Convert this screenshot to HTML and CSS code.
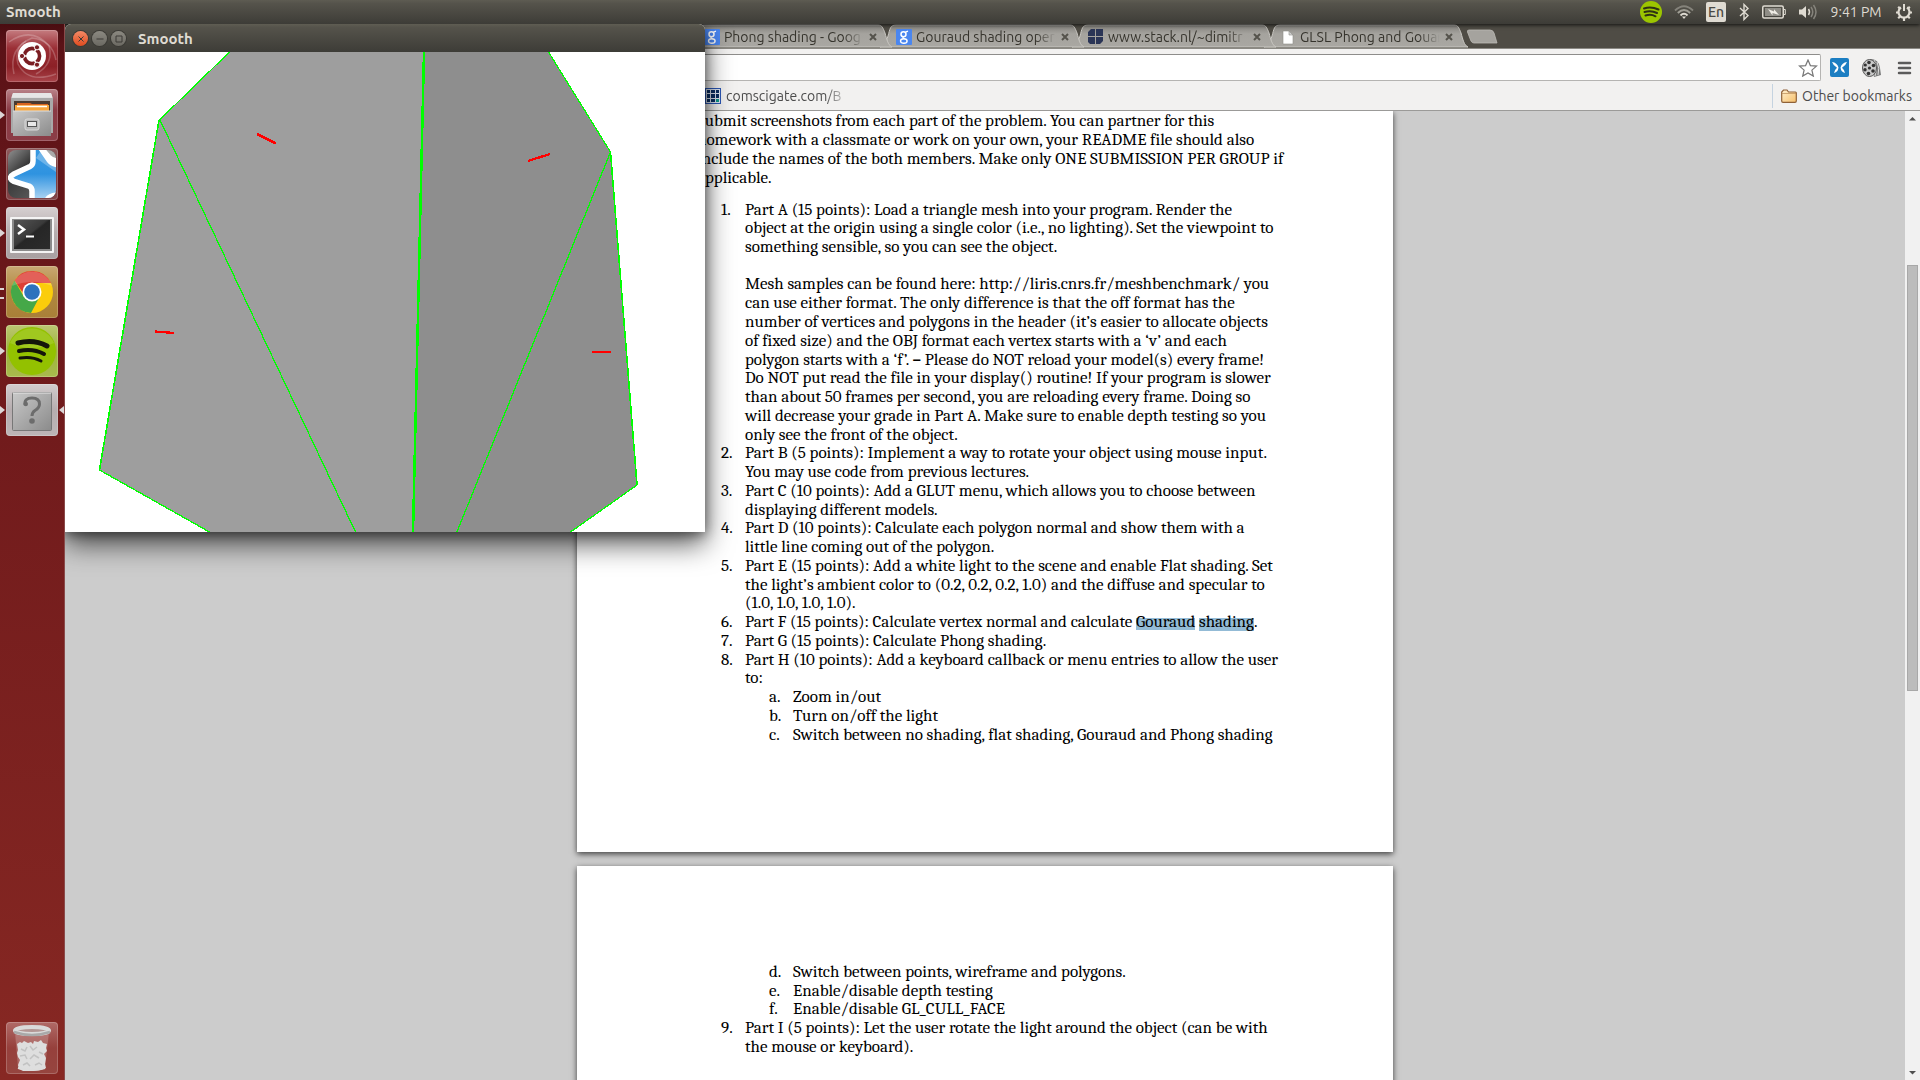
FILE: index.html
```html
<!DOCTYPE html>
<html lang="en">
<head>
<meta charset="utf-8">
<title>Smooth</title>
<link rel="stylesheet" href="styles.css">
</head>
<body>
<svg class="defs" width="0" height="0" aria-hidden="true">
  <defs>
    <linearGradient id="tabFill" x1="0" y1="0" x2="0" y2="1">
      <stop offset="0" stop-color="#83817c"/><stop offset=".4" stop-color="#a5a39e"/><stop offset="1" stop-color="#a9a7a2"/>
    </linearGradient>
    <linearGradient id="steel" x1="0" y1="0" x2="1" y2="1">
      <stop offset="0" stop-color="#c9c9c9"/><stop offset="1" stop-color="#8b8b8b"/>
    </linearGradient>
    <linearGradient id="blue" x1="0" y1="0" x2="0" y2="1">
      <stop offset="0" stop-color="#3c9be2"/><stop offset=".5" stop-color="#2f93e0"/><stop offset="1" stop-color="#c4e0f6"/>
    </linearGradient>
    <linearGradient id="dark" x1="0" y1="0" x2="1" y2="1">
      <stop offset="0" stop-color="#9a9a9a"/><stop offset=".35" stop-color="#3a3a3a"/><stop offset="1" stop-color="#6e6e6e"/>
    </linearGradient>
    <linearGradient id="screen" x1="0" y1="0" x2="1" y2="1">
      <stop offset="0" stop-color="#555"/><stop offset=".45" stop-color="#3a3a3a"/><stop offset=".5" stop-color="#262626"/><stop offset="1" stop-color="#2c2c2c"/>
    </linearGradient>
    <linearGradient id="folder" x1="0" y1="0" x2="1" y2="1">
      <stop offset="0" stop-color="#fff0cf"/><stop offset="1" stop-color="#f6bf6b"/>
    </linearGradient>
    <path id="tabShape" d="M0 23C5 22 6 18 8 12C10 5 10 1 16 1H190C194 1 195 4 197 9C199 16 200 21 204 23Z"/>
    <g id="google">
      <rect width="16" height="16" rx="1" fill="#4a86f0"/>
      <ellipse cx="7.500" cy="5.200" rx="2.500" ry="2.500" fill="none" stroke="#fff" stroke-width="1.500"/>
      <path d="M9.500 3.200L12 2.200M8 7.500C6 8.500 7 9.300 8.500 9.800" fill="none" stroke="#fff" stroke-width="1.300"/>
      <ellipse cx="7.800" cy="12" rx="3.300" ry="2.200" fill="none" stroke="#fff" stroke-width="1.400"/>
    </g>
  </defs>
</svg>

<header class="panel">
  <span class="panel-title">Smooth</span>
  <div class="indicators">
    <svg width="22" height="22" viewBox="0 0 22 22"><circle cx="11" cy="11" r="11" fill="#9cc500"/><path d="M4 7.500Q11 5 18.500 8.500M4.500 11Q11 9 17 12M5.500 14.500Q11 12.700 15.500 15.300" fill="none" stroke="#2e3014" stroke-width="2" stroke-linecap="round"/></svg>
    <svg width="20" height="14" viewBox="0 0 20 14" fill="none" stroke-width="1.800"><path d="M1 5.500Q10-3 19 5.500" stroke="#85837b"/><path d="M3.800 8Q10 2 16.200 8" stroke="#a19f96"/><path d="M6.500 10.500Q10 7 13.500 10.500" stroke="#dfdbd2"/><path d="M8 11.500h4L10 14z" fill="#dfdbd2"/></svg>
    <span class="lang">En</span>
    <svg width="12" height="18" viewBox="0 0 12 18"><path d="M2 5L10 12.500L6 16.500V1.500L10 5.500L2 13" fill="none" stroke="#dfdbd2" stroke-width="1.400"/></svg>
    <svg width="24" height="14" viewBox="0 0 24 14"><rect x=".75" y="1" width="20.500" height="12" rx="1.500" fill="none" stroke="#dfdbd2" stroke-width="1.500"/><path d="M22 4.500h1.300v5H22" fill="none" stroke="#dfdbd2"/><rect x="3" y="3" width="16" height="8" fill="#8f8d86"/><path d="M6 4L12 6.500V4.200L17 10L10.500 8V10.500Z" fill="#f0ede6"/></svg>
    <svg width="20" height="18" viewBox="0 0 20 18"><path d="M1 6.500h3L8 3v12L4 11.500H1z" fill="#dfdbd2"/><path d="M10.500 6Q12.500 9 10.500 12" fill="none" stroke="#dfdbd2" stroke-width="1.500"/><path d="M13 4Q16.500 9 13 14M15.500 2Q20.500 9 15.500 16" fill="none" stroke="#85837b" stroke-width="1.500"/></svg>
    <time class="clock">9:41 PM</time>
    <svg width="16" height="18" viewBox="0 0 16 18"><path d="M5 4.500A5.500 5.500 0 1 0 11 4.500" fill="none" stroke="#dfdbd2" stroke-width="2.200"/><path d="M8 1v7" stroke="#dfdbd2" stroke-width="2"/><path d="M0 9.500h3M13 9.500h3M8 14.500v3.500M2.200 15.300l2-2M13.800 15.300l-2-2M2.200 3.700l2 2M13.800 3.700l-2 2" stroke="#dfdbd2" stroke-width="2.200"/></svg>
  </div>
</header>

<main class="desktop">
  <nav class="launcher" aria-label="Launcher">
    <button class="tile dash" aria-label="Dash">
      <svg width="52" height="52" viewBox="0 0 52 52"><g fill="none" stroke="#fff" stroke-opacity=".22" stroke-width="1.500"><path d="M3 12Q26-4 43 16Q48 34 30 44"/><path d="M8 44Q2 18 26 8Q46 10 50 30"/><path d="M50 44Q22 54 12 34Q8 18 20 11"/></g><circle cx="26" cy="26" r="14" fill="#fff"/><circle cx="26" cy="26" r="7.600" fill="none" stroke="#7a1d22" stroke-width="3.600"/><g stroke="#fff" stroke-width="1.500"><path d="M21 26h-6M28.500 30.300l3 5.200M28.500 21.700l3-5.200"/></g><g fill="#7a1d22" stroke="#fff"><circle cx="16" cy="26" r="2.600"/><circle cx="31" cy="17.300" r="2.600"/><circle cx="31" cy="34.700" r="2.600"/></g></svg>
    </button>
    <button class="tile files running" aria-label="Files">
      <svg width="52" height="52" viewBox="0 0 52 52"><path d="M7 4h38l2 6v34H5V10z" fill="#d8d8d8"/><path d="M5 9h42v35H5z" fill="#a9a9a9"/><path d="M7 4h38l1.500 4.500h-41z" fill="#e6e6e6"/><path d="M8 12h36v11H8z" fill="#4a3a30"/><path d="M11 14h13l2 1h16v8H11z" fill="#d9641f"/><path d="M9 16h34v6H9z" fill="#f7a63d"/><path d="M11 17.500h30" stroke="#fff" stroke-width="1.500"/><path d="M7 22h38v25H7z" fill="url(#steel)"/><path d="M7 22h38" stroke="#ddd"/><rect x="19" y="30" width="14" height="11" rx="2" fill="#b9b9b9" stroke="#dadada"/><rect x="21.500" y="32.500" width="9" height="5" fill="#e8e8e8" stroke="#555"/></svg>
    </button>
    <button class="tile anki" aria-label="Anki">
      <svg width="52" height="52" viewBox="0 0 52 52"><defs><clipPath id="ankiClip"><rect x="2" y="2" width="48" height="48" rx="8"/></clipPath></defs><g clip-path="url(#ankiClip)"><path d="M0 0h52v52H0z" fill="url(#dark)"/><path d="M27-4V13Q27 17 24 18.500L8 26Q1 30 8 33.500L23 38Q26 39.500 26 43V56H60V18Q46 17 43 12L32-4Z" fill="url(#blue)" stroke="#fff" stroke-width="5.500"/><path d="M30 10L50 24V14L34 4Z" fill="#fff" opacity=".28"/><path d="M38-2h16v11L46 10z" fill="#aaa"/><path d="M34-2L43 9Q46 13 54 12" fill="none" stroke="#fff" stroke-width="5"/><path d="M40 54Q42 47 52 47" fill="none" stroke="#fff" stroke-width="5"/></g></svg>
    </button>
    <button class="tile terminal running" aria-label="Terminal">
      <svg width="52" height="52" viewBox="0 0 52 52"><rect x="4" y="10" width="44" height="36" rx="1" fill="#f4f4f4"/><rect x="6" y="12" width="40" height="32" fill="#8b8b8b"/><rect x="8" y="13" width="36" height="29" fill="url(#screen)"/><path d="M12 18l6 4.500-6 4.500" fill="none" stroke="#fff" stroke-width="2.500"/><path d="M20 29.500h8" stroke="#fff" stroke-width="2"/></svg>
    </button>
    <button class="tile chrome multi" aria-label="Google Chrome">
      <svg width="52" height="52" viewBox="0 0 52 52"><circle cx="26" cy="26" r="21" fill="#fbcd0b"/><path d="M8.500 14.500A21 21 0 0 1 45 17H26L17 27z" fill="#dd3e35"/><path d="M8.500 14.500A21 21 0 0 0 25 47L34 30L18 31z" fill="#45a848"/><circle cx="26" cy="26" r="9.500" fill="#fff"/><circle cx="26" cy="26" r="7.800" fill="#2e72bd"/><path d="M6 20A21 21 0 0 1 46 20Q26 12 6 20" fill="#fff" opacity=".18"/></svg>
    </button>
    <button class="tile spotify running" aria-label="Spotify">
      <svg width="52" height="52" viewBox="0 0 52 52"><circle cx="26" cy="26" r="24" fill="#93c100"/><path d="M4 18A24 24 0 0 1 48 18Q26 28 4 18" fill="#fff" opacity=".12"/><g fill="none" stroke="#14160a" stroke-linecap="round"><path d="M12 18Q28 14 41 21" stroke-width="5"/><path d="M13 26Q27 23 38 29" stroke-width="4"/><path d="M14 33Q26 31 35 36" stroke-width="3"/></g></svg>
    </button>
    <button class="tile unknown running focused" aria-label="Smooth">
      <svg width="52" height="52" viewBox="0 0 52 52"><rect x="6.500" y="8.500" width="39" height="38" rx="1" fill="url(#steel)" stroke="#777"/><path d="M7 9h38" stroke="#e8e8e8"/><path d="M19 21Q18 14 26 14Q33.500 14 33.500 20Q33.500 24 29 26.500Q26 28.500 26 32" fill="none" stroke="#6c6c6c" stroke-width="3"/><circle cx="19.800" cy="20" r="2.200" fill="#6c6c6c"/><circle cx="26" cy="37" r="2.800" fill="#6c6c6c"/></svg>
    </button>
    <button class="tile trash" aria-label="Trash">
      <svg width="52" height="52" viewBox="0 0 52 52"><path d="M9 10L12 46Q26 49 39 46L43 10z" fill="#fff" opacity=".2"/><path d="M11 22l3-2 2 1 2-2 4 2 3-1 2 2 1-3 4 1 3-2 2 3 4 1-1 4 1 3-3 3 2 4-1 6 1 4-5 2-8 1-10 0-4-2-1-4 2-5-2-3-1-4 1-3z" fill="#dedede"/><path d="M15 27l4 2 2-4M24 24l3 4 4-3M33 30l4 2M14 34l5-1 2 4M24 37l4-4 5 3M17 43l4-2 3 3M29 43l4-2 3 2" fill="none" stroke="#c2c2c2" stroke-width="1.500"/><path d="M12 46Q26 50 39 46" fill="none" stroke="#ddd" stroke-width="2"/><ellipse cx="26" cy="8.500" rx="17" ry="3.600" fill="#b39795" stroke="#dadada" stroke-width="4"/><path d="M8 10Q26 16 44 10" fill="none" stroke="#a9a9a9" stroke-width="2.500"/></svg>
    </button>
  </nav>

  <section class="browser" aria-label="Browser">
    <div class="tabstrip">
      <div class="tab">
        <svg class="tab-bg" width="204" height="24" viewBox="0 0 204 24"><use href="#tabShape" fill="url(#tabFill)" stroke="#c9c7c2"/></svg>
        <svg class="favicon" width="16" height="16" viewBox="0 0 16 16"><use href="#google"/></svg>
        <span class="tab-title">Phong shading - Goog</span>
        <button class="tab-close" aria-label="Close tab"><svg width="8" height="8" viewBox="0 0 8 8"><path d="M1 1l6 6M7 1L1 7"/></svg></button>
      </div>
      <div class="tab">
        <svg class="tab-bg" width="204" height="24" viewBox="0 0 204 24"><use href="#tabShape" fill="url(#tabFill)" stroke="#c9c7c2"/></svg>
        <svg class="favicon" width="16" height="16" viewBox="0 0 16 16"><use href="#google"/></svg>
        <span class="tab-title">Gouraud shading oper</span>
        <button class="tab-close" aria-label="Close tab"><svg width="8" height="8" viewBox="0 0 8 8"><path d="M1 1l6 6M7 1L1 7"/></svg></button>
      </div>
      <div class="tab">
        <svg class="tab-bg" width="204" height="24" viewBox="0 0 204 24"><use href="#tabShape" fill="url(#tabFill)" stroke="#c9c7c2"/></svg>
        <svg class="favicon" width="16" height="16" viewBox="0 0 16 16"><path d="M3 0h4v7H0V3zM8 0h7v7H8zM0 8h7v7H2L0 13zM8 8h7v4l-3 3H8z" fill="#2b3556"/></svg>
        <span class="tab-title">www.stack.nl/~dimitr</span>
        <button class="tab-close" aria-label="Close tab"><svg width="8" height="8" viewBox="0 0 8 8"><path d="M1 1l6 6M7 1L1 7"/></svg></button>
      </div>
      <div class="tab">
        <svg class="tab-bg" width="204" height="24" viewBox="0 0 204 24"><use href="#tabShape" fill="url(#tabFill)" stroke="#c9c7c2"/></svg>
        <svg class="favicon" width="16" height="16" viewBox="0 0 16 16"><path d="M3 2h6l4 4v9H3z" fill="#fff" stroke="#8f8d88" stroke-width=".6"/><path d="M9 2v4h4z" fill="#d0d0d0" stroke="#8f8d88" stroke-width=".6"/></svg>
        <span class="tab-title">GLSL Phong and Gouar</span>
        <button class="tab-close" aria-label="Close tab"><svg width="8" height="8" viewBox="0 0 8 8"><path d="M1 1l6 6M7 1L1 7"/></svg></button>
      </div>
      <button class="new-tab" aria-label="New tab"><svg width="32" height="16" viewBox="0 0 32 16"><path d="M3 1H24Q27 1 28 4L31 14H8Q6 14 5 12L1.500 3Q1 1 3 1Z" fill="#a5a39e" stroke="#bcbab5" stroke-width=".8"/></svg></button>
    </div>

    <div class="toolbar">
      <div class="omnibox">
        <input class="address" type="text" aria-label="Address">
        <button class="icon-btn" aria-label="Bookmark this page"><svg width="20" height="18" viewBox="0 0 20 18"><path d="M10 1l2.400 5.600 6.100.5-4.600 4 1.400 6L10 13.900 4.700 17.100l1.400-6-4.600-4 6.100-.5z" fill="#fff" stroke="#777" stroke-width="1.200"/></svg></button>
      </div>
      <div class="extensions">
        <button class="icon-btn" aria-label="Extension"><svg width="20" height="20" viewBox="0 0 20 20"><rect width="19" height="19" rx="2" fill="#1c7ec2"/><path d="M2 4Q7 4.500 8.500 9.500Q8 14 4 15Q4.500 12 7 9.800Q3.500 8 2 4M17 4Q12 4.500 10.500 9.500Q11 14 15 15Q14.500 12 12 9.800Q15.500 8 17 4" fill="#fff"/></svg></button>
        <button class="icon-btn" aria-label="Video extension"><svg width="20" height="20" viewBox="0 0 20 20"><path d="M8 1Q17 1 18 10L19 17L12 19Z" fill="#7c7c7c"/><path d="M12 2Q16 8 13 18M15 4Q18 10 16 17" fill="none" stroke="#ddd"/><ellipse cx="7.500" cy="10" rx="7" ry="8.500" fill="#c9c9c9" stroke="#555"/><g fill="#333"><circle cx="7.500" cy="10" r="1.600"/><circle cx="7" cy="4.500" r="1.800"/><circle cx="11.500" cy="7.500" r="1.800"/><circle cx="11" cy="13" r="1.800"/><circle cx="6.500" cy="15.500" r="1.800"/><circle cx="3" cy="11.800" r="1.700"/><circle cx="3.300" cy="7" r="1.600"/></g></svg></button>
        <button class="icon-btn" aria-label="Menu"><svg width="20" height="16" viewBox="0 0 20 16"><path d="M5 3h11M5 8h11M5 13h11" stroke="#5b5b5b" stroke-width="2.500" stroke-linecap="round"/></svg></button>
      </div>
    </div>

    <div class="bookmarks">
      <a class="bookmark" href="#">
        <svg width="16" height="16" viewBox="0 0 16 16"><rect x=".5" y=".5" width="15" height="15" fill="#dfe8f5" stroke="#2b57b5"/><path d="M2 2h3v3H2zM6 2h4v3H6zM11 2h3v3h-3zM2 6h3v4H2zM6 6h4v4H6zM11 6h3v4h-3zM2 11h3v3H2zM6 11h4v3H6z" fill="#0b2f63"/><path d="M11 11h3v3h-3z" fill="#109a8a"/></svg>
        <span class="bookmark-title">comscigate.com/B</span>
      </a>
      <a class="bookmark other" href="#">
        <svg width="16" height="14" viewBox="0 0 16 14"><path d="M.7 12V3L2.500 1H6l1.500 2H14.500Q15.300 3 15.300 4V12Q15.300 13.300 14 13.300H2Q.7 13.300 .7 12Z" fill="url(#folder)" stroke="#8f6138" stroke-width="1.200"/><path d="M1 4.500h14" stroke="#b98a55" stroke-width=".7"/></svg>
        <span>Other bookmarks</span>
      </a>
    </div>

    <div class="viewer">
      <div class="pages">
        <article class="page first">
          <p class="intro">
            <span class="line">Submit screenshots from each part of the problem. You can partner for this</span>
            <span class="line">homework with a classmate or work on your own, your README file should also</span>
            <span class="line">include the names of the both members. Make only ONE SUBMISSION PER GROUP if</span>
            <span class="line">applicable.</span>
          </p>
          <ol class="parts">
            <li><span class="num">1.</span><div>
              <span class="line tight">Part A (15 points): Load a triangle mesh into your program. Render the</span>
              <span class="line">object at the origin using a single color (i.e., no lighting). Set the viewpoint to</span>
              <span class="line">something sensible, so you can see the object.</span>
              <span class="line tight">&nbsp;</span>
              <span class="line">Mesh samples can be found here: http://liris.cnrs.fr/meshbenchmark/ you</span>
              <span class="line">can use either format. The only difference is that the off format has the</span>
              <span class="line">number of vertices and polygons in the header (it’s easier to allocate objects</span>
              <span class="line">of fixed size) and the OBJ format each vertex starts with a ‘v’ and each</span>
              <span class="line tight">polygon starts with a ‘f’. <b>–</b> Please do NOT reload your model(s) every frame!</span>
              <span class="line">Do NOT put read the file in your display() routine! If your program is slower</span>
              <span class="line">than about 50 frames per second, you are reloading every frame. Doing so</span>
              <span class="line">will decrease your grade in Part A. Make sure to enable depth testing so you</span>
              <span class="line tight">only see the front of the object.</span>
            </div></li>
            <li><span class="num">2.</span><div>
              <span class="line">Part B (5 points): Implement a way to rotate your object using mouse input.</span>
              <span class="line">You may use code from previous lectures.</span>
            </div></li>
            <li><span class="num">3.</span><div>
              <span class="line">Part C (10 points): Add a GLUT menu, which allows you to choose between</span>
              <span class="line tight">displaying different models.</span>
            </div></li>
            <li><span class="num">4.</span><div>
              <span class="line">Part D (10 points): Calculate each polygon normal and show them with a</span>
              <span class="line">little line coming out of the polygon.</span>
            </div></li>
            <li><span class="num">5.</span><div>
              <span class="line">Part E (15 points): Add a white light to the scene and enable Flat shading. Set</span>
              <span class="line tight">the light’s ambient color to (0.2, 0.2, 0.2, 1.0) and the diffuse and specular to</span>
              <span class="line">(1.0, 1.0, 1.0, 1.0).</span>
            </div></li>
            <li><span class="num">6.</span><div>
              <span class="line">Part F (15 points): Calculate vertex normal and calculate <mark>Gouraud</mark> <mark class="deep">shading</mark>.</span>
            </div></li>
            <li><span class="num">7.</span><div>
              <span class="line">Part G (15 points): Calculate Phong shading.</span>
            </div></li>
            <li><span class="num">8.</span><div>
              <span class="line tight">Part H (10 points): Add a keyboard callback or menu entries to allow the user</span>
              <span class="line">to:</span>
              <ol>
                <li><span class="num">a.</span><span class="line">Zoom in/out</span></li>
                <li><span class="num">b.</span><span class="line">Turn on/off the light</span></li>
                <li><span class="num">c.</span><span class="line">Switch between no shading, flat shading, Gouraud and Phong shading</span></li>
              </ol>
            </div></li>
          </ol>
        </article>
        <article class="page second">
          <ol class="parts">
            <li><span class="num"></span><ol>
              <li><span class="num">d.</span><span class="line">Switch between points, wireframe and polygons.</span></li>
              <li class="tight"><span class="num">e.</span><span class="line">Enable/disable depth testing</span></li>
              <li><span class="num">f.</span><span class="line">Enable/disable GL_CULL_FACE</span></li>
            </ol></li>
            <li><span class="num">9.</span><div>
              <span class="line">Part I (5 points): Let the user rotate the light around the object (can be with</span>
              <span class="line">the mouse or keyboard).</span>
            </div></li>
          </ol>
        </article>
      </div>
      <div class="scrollbar">
        <svg width="15" height="15" viewBox="0 0 15 15"><path d="M4 9.500L7.500 6L11 9.500z" fill="#505050"/></svg>
        <div class="track"><div class="thumb"></div></div>
        <svg width="15" height="15" viewBox="0 0 15 15"><path d="M4 6L7.500 9.500L11 6z" fill="#505050"/></svg>
      </div>
    </div>
  </section>
</main>

<section class="window" aria-label="Smooth window">
  <div class="titlebar">
    <button class="win-btn close" aria-label="Close"><svg width="8" height="8" viewBox="0 0 8 8"><path d="M1.500 1.500l5 5M6.500 1.500l-5 5"/></svg></button>
    <button class="win-btn" aria-label="Minimize"><svg width="8" height="8" viewBox="0 0 8 8"><path d="M0.500 4h7"/></svg></button>
    <button class="win-btn" aria-label="Maximize"><svg width="8" height="8" viewBox="0 0 8 8"><path d="M1 1h6v6H1z"/></svg></button>
    <h1 class="win-title">Smooth</h1>
  </div>
  <svg class="scene" width="640" height="480" viewBox="0 0 640 480" shape-rendering="crispEdges">
    <path d="M164.500 0L94.500 68L34 418L144.500 480H348L359 0Z" fill="#9e9e9e"/>
    <path d="M359 0H483.500L545.500 100L572 433L505.500 480H348Z" fill="#8e8e8e"/>
    <g fill="none" stroke="#0f0">
      <path d="M164.500 0L94.500 68M34.500 418L144.500 480M95 68L291 481M483.500 0L545.500 100L391.500 481M572 433L505.500 480" stroke-width="1.300"/>
      <path d="M94 68L34.500 418M545.500 100L572 433" stroke-width="1.600"/>
      <path d="M359 0L348 480" stroke-width="2.500"/>
    </g>
    <path d="M192 82L211 91.500M463 109L485 102M90 279.500L109 281M527 300H546" fill="none" stroke="red" stroke-width="2.300"/>
  </svg>
</section>
</body>
</html>
```
FILE: styles.css
```css
* { box-sizing: border-box; }

body {
  margin: 0;
  height: 100vh;
  display: flex;
  flex-direction: column;
  overflow: hidden;
  position: relative;
  background: #ccc;
  font: 14px/20px Ubuntu, "Open Sans", "Noto Sans", sans-serif;
  color: #3c3b37;
}

button {
  margin: 0;
  padding: 0;
  border: 0;
  background: none;
  display: flex;
  align-items: center;
  justify-content: center;
}

svg { display: block; flex: none; }
.defs { position: absolute; }
ol { margin: 0; padding: 0; list-style: none; }

/* Top panel */
.panel {
  flex: none;
  height: 24px;
  padding: 0 8px 0 6px;
  display: flex;
  align-items: center;
  justify-content: space-between;
  background: linear-gradient(#5e5c52, #55534b 15%, #3d3c37);
  color: #dfdbd2;
  z-index: 2;
  box-shadow: 0 1px 4px rgba(0, 0, 0, .8);
}
.panel-title, .win-title {
  margin: 0;
  font-size: 15px;
  line-height: 20px;
  font-weight: bold;
  color: #dfdbd2;
}
.indicators { display: flex; align-items: center; gap: 12px; }
.lang {
  width: 20px;
  height: 20px;
  border-radius: 2px;
  background: #dfdbd2;
  color: #4a4943;
  text-align: center;
  line-height: 20px;
  font-weight: 500;
}
.clock { min-width: 52px; margin-right: 2px; text-align: center; }

.desktop { flex: 1; min-height: 0; display: flex; }

/* Launcher */
.launcher {
  flex: none;
  width: 65px;
  padding: 6px 6px 6px;
  display: flex;
  flex-direction: column;
  gap: 7px;
  background: linear-gradient(#4a0d11, #5b1217 2%, #6e191b 30%, #872823);
  border-right: 1px solid #8a4a4a;
  z-index: 4;
}
.tile {
  position: relative;
  width: 52px;
  height: 52px;
  border-radius: 4px;
  box-shadow: inset 0 0 0 1px rgba(255, 255, 255, .2);
}
.dash { background: linear-gradient(#c57c80, #9b2f36 35%, #8c2026 70%, #a8444a); }
.files { background: linear-gradient(#b98389, #8a3a44 40%, #8b3d47); }
.anki { background: linear-gradient(#8f5d5f, #7c3b3d 40%, #814548); }
.terminal { background: linear-gradient(#d6d0d1, #b5adae 50%, #a8a0a1); }
.chrome { background: linear-gradient(#c9a873, #b0893f 50%, #a97f38); }
.spotify { background: linear-gradient(#bcc772, #9db43a 50%, #a9ba4e); }
.unknown { background: linear-gradient(#d2cccd, #b6adaf 50%, #bdb6b7); }
.trash { margin-top: auto; background: linear-gradient(#b06a67, #96403c 50%, #96453f); }
.running::before, .focused::after {
  content: "";
  position: absolute;
  top: 22px;
  left: -6px;
  border: solid transparent;
  border-width: 4px 0 4px 5px;
  border-left-color: #dcd6d6;
}
.focused::after {
  left: 53px;
  border-width: 4px 5px 4px 0;
  border-right-color: #dcd6d6;
}
.multi::before {
  content: "";
  position: absolute;
  top: 22px;
  left: -6px;
  width: 4px;
  height: 7px;
  border: solid #dcd6d6;
  border-width: 2px 0;
}

/* Browser */
.browser {
  flex: 1;
  min-width: 0;
  display: flex;
  flex-direction: column;
  isolation: isolate;
}
.tabstrip {
  flex: none;
  height: 25px;
  padding-left: 623px;
  display: flex;
  align-items: flex-end;
  background: #4f4c45;
  border-bottom: 1px solid #8b8984;
}
.tab {
  position: relative;
  width: 192px;
  height: 24px;
  padding: 2px 0 0 16px;
  display: flex;
  align-items: center;
  gap: 4px;
}
.tab:nth-child(1) { z-index: 4; }
.tab:nth-child(2) { z-index: 3; }
.tab:nth-child(3) { z-index: 2; }
.tab:nth-child(4) { z-index: 1; }
.tab-bg { position: absolute; left: 0; top: 0; }
.favicon, .tab-title, .tab-close { position: relative; }
.tab-title {
  width: 140px;
  white-space: nowrap;
  color: #35332c;
  -webkit-mask-image: linear-gradient(90deg, #000 85%, transparent);
  mask-image: linear-gradient(90deg, #000 85%, transparent);
}
.tab-close { width: 10px; height: 16px; }
.tab-close path { stroke: #55534c; stroke-width: 2; }
.new-tab { margin: 0 0 3px 10px; }

.toolbar {
  flex: none;
  padding: 5px 6px 0 64px;
  display: flex;
  align-items: center;
  gap: 9px;
  background: #f2f1f0;
}
.omnibox {
  flex: 1;
  height: 27px;
  padding-right: 2px;
  display: flex;
  align-items: center;
  background: #fff;
  border: 1px solid #b5b4b2;
  border-top-color: #8e8d8b;
  border-radius: 2px;
}
.address { flex: 1; border: 0; outline: 0; background: none; font: inherit; }
.icon-btn { width: 20px; height: 20px; }
.extensions { display: flex; gap: 12px; }

.bookmarks {
  flex: none;
  height: 30px;
  padding: 0 8px 0 640px;
  display: flex;
  align-items: center;
  justify-content: space-between;
  background: #f2f1f0;
  border-bottom: 1px solid #9b9a98;
}
.bookmark {
  display: flex;
  align-items: center;
  gap: 5px;
  color: #4c4c4c;
  text-decoration: none;
}
.bookmark-title {
  width: 124px;
  white-space: nowrap;
  -webkit-mask-image: linear-gradient(90deg, #000 80%, transparent);
  mask-image: linear-gradient(90deg, #000 80%, transparent);
}
.other { height: 24px; padding-left: 8px; border-left: 1px solid #c5d3e0; }

/* Document viewer */
.viewer { flex: 1; min-height: 0; display: flex; background: #ccc; }
.pages {
  flex: 1;
  min-width: 0;
  overflow: hidden;
  display: flex;
  flex-direction: column;
  align-items: center;
  gap: 14px;
}
.page {
  flex: none;
  width: 816px;
  background: #fff;
  box-shadow: 0 2px 6px rgba(0, 0, 0, .7);
  font: 17px/19px Cambria, Caladea, "Liberation Serif", serif;
  color: #000;
}
.first { padding: 0 120px 108px; }
.second { padding: 96px 120px; }
.intro { margin: 0 0 13px; }
.line { display: block; white-space: nowrap; }
.tight { margin-bottom: -1px; }
.parts { padding-left: 24px; }
.parts ol { padding-left: 24px; }
.parts li { display: flex; }
.num { flex: none; width: 24px; }
mark {
  color: inherit;
  background: linear-gradient(#93bbd6, #93bbd6) 0 6px / 100% 12px no-repeat;
}
.deep { background-size: 100% 16px; }

.scrollbar {
  flex: none;
  width: 15px;
  display: flex;
  flex-direction: column;
  background: #f1f1f1;
}
.track {
  flex: 1;
  padding: 0 2px;
  display: grid;
  grid-template-rows: 139fr 426fr 374fr;
}
.thumb { grid-row: 2; background: #bcbcbc; border: 1px solid #a8a8a8; }

/* Floating window */
.window {
  position: absolute;
  left: 65px;
  top: 24px;
  width: 640px;
  z-index: 3;
  background: #fff;
  border-radius: 6px 6px 0 0;
  box-shadow: 0 12px 28px rgba(0, 0, 0, .65), 0 2px 12px rgba(0, 0, 0, .45);
  clip-path: inset(0 -60px -60px 0);
}
.titlebar {
  height: 28px;
  padding: 1px 0 0 8px;
  display: flex;
  align-items: center;
  gap: 4px;
  background: linear-gradient(#5f5d53, #55534b 12%, #3d3c37);
  border-radius: 6px 6px 0 0;
}
.win-btn {
  width: 15px;
  height: 15px;
  border-radius: 50%;
  background: linear-gradient(#8b8981, #6b6962);
  box-shadow: 0 0 0 1px #3b3a35;
}
.win-btn path { fill: none; stroke: #3c3b37; }
.close { background: linear-gradient(#f58a66, #df4b1f); }
.win-title { margin-left: 8px; }
.scene { width: 100%; height: auto; }
```
